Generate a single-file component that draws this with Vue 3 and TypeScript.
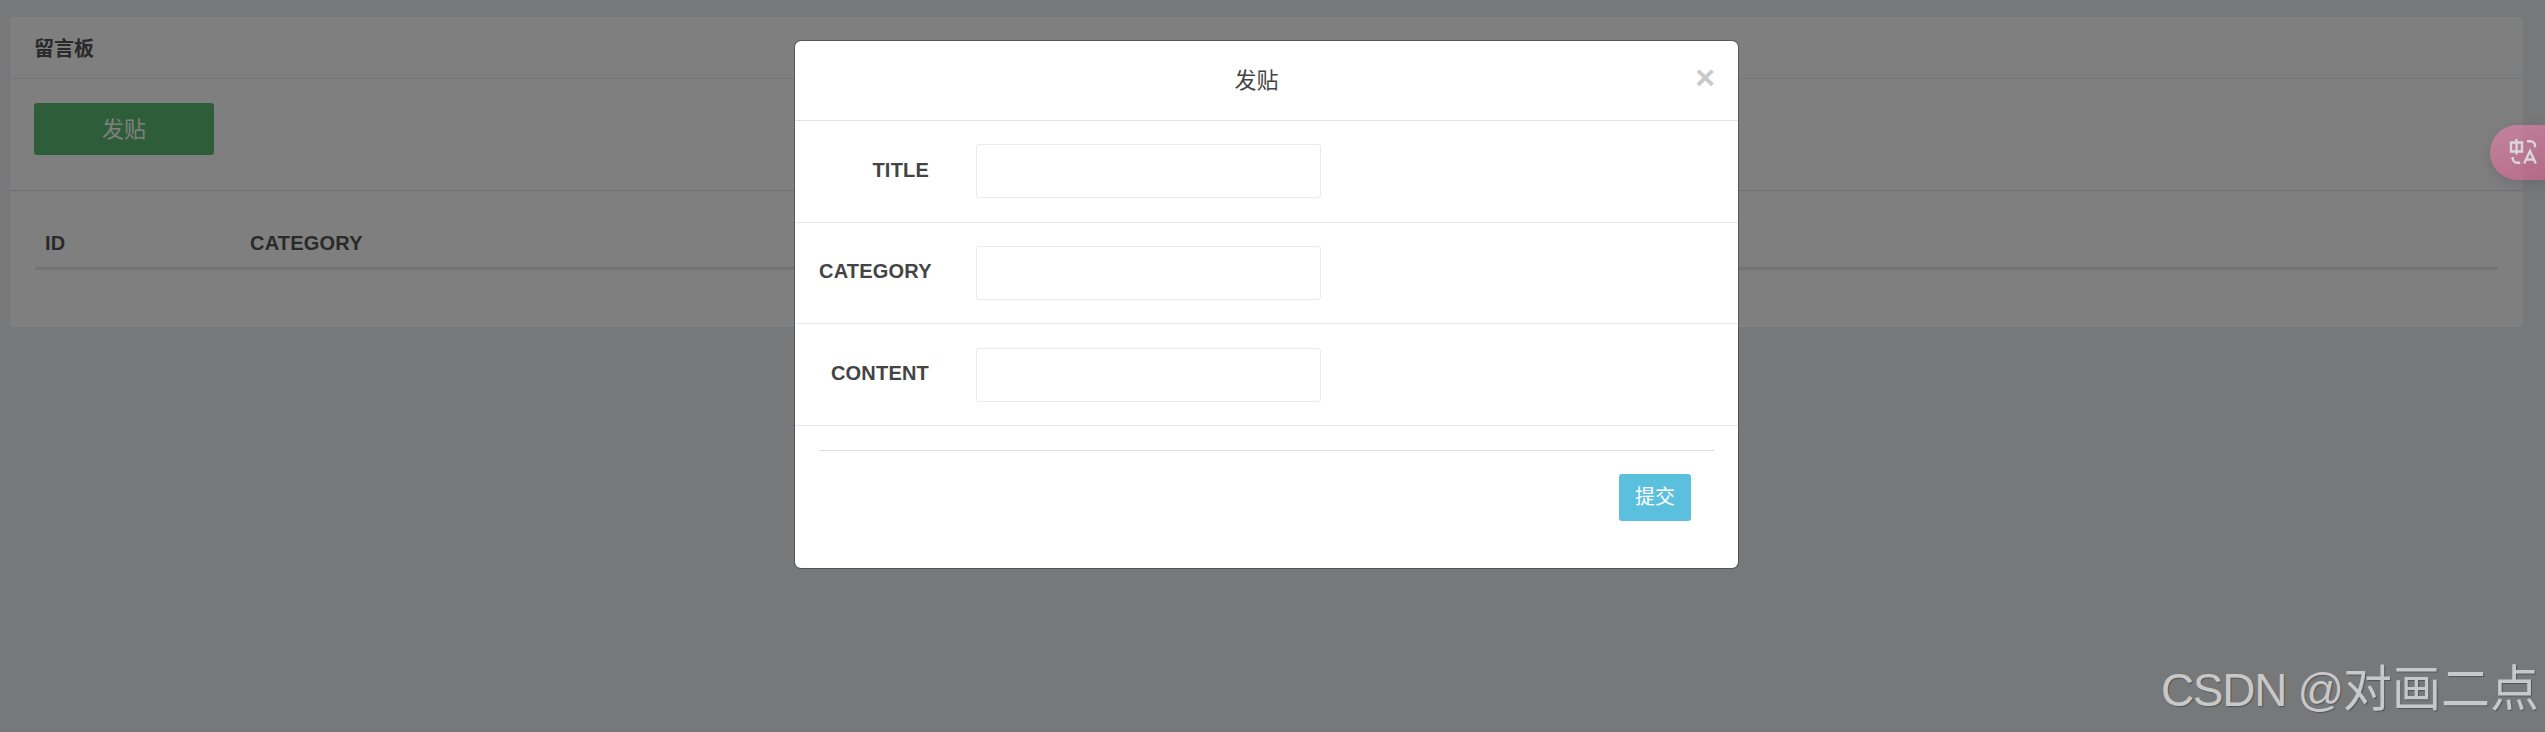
<script setup lang="ts">
const headers: string[] = ['ID', 'CATEGORY']
const fields: string[] = ['TITLE', 'CATEGORY', 'CONTENT']
</script>

<template>
  <div class="page">
    <section class="card">
      <h2 class="card-title">留言板</h2>
      <div class="toolbar"><button class="post">发贴</button></div>
      <div class="table-wrap">
        <div class="thead">
          <div v-for="h in headers" :key="h" class="th">{{ h }}</div>
        </div>
      </div>
    </section>

    <div class="overlay"></div>

    <div class="modal">
      <header class="modal-head">
        <span class="modal-title">发贴</span>
        <span class="close">×</span>
      </header>
      <div v-for="f in fields" :key="f" class="row">
        <label class="label">{{ f }}</label>
        <input class="input" type="text" />
      </div>
      <div class="actions">
        <button class="submit">提交</button>
      </div>
    </div>

    <div class="translate">
      <svg viewBox="0 0 32 32" width="32" height="32" fill="none" stroke="#d8d8d8" stroke-width="2.4">
        <path d="M4 5.5h11v9H4zM9.5 2v15.5" />
        <path d="M20 4.2h3.5a4.5 4.5 0 0 1 4.5 4.5v1.5" />
        <path d="M5.7 20v1.3a4.5 4.5 0 0 0 4.5 4.5h3" />
        <path d="M17.2 26.5l5.8-12.5 5.8 12.5M19.4 22.5h7.2" />
      </svg>
    </div>

    <div class="watermark"><span class="wm-latin">CSDN @</span><span class="wm-cjk">对画二点</span></div>
  </div>
</template>

<style>
html, body { margin: 0; padding: 0; background: #fff; }
</style>

<style scoped>
.page {
  position: relative;
  height: 732px;
  width: 2545px;
  overflow: hidden;
  padding: 17px 22px 0 10px;
  box-sizing: border-box;
  background: #eef0f4;
  font-family: "Liberation Sans", "Noto Sans CJK SC", sans-serif;
  color: #555;
}
.card {
  background: #fff;
  height: 310px;
  border-radius: 4px;
}
.card-title {
  margin: 0;
  height: 62px;
  box-sizing: border-box;
  line-height: 60px;
  padding: 2px 0 0 24px;
  font-size: 20px;
  font-weight: 700;
  color: #555;
  border-bottom: 1px solid #e8ebf0;
}
.toolbar {
  height: 112px;
  padding: 24px 0 0 24px;
  box-sizing: border-box;
  border-bottom: 1px solid #dcdee8;
}
.post {
  display: block;
  width: 180px;
  height: 52px;
  padding: 0 0 4px;
  background: #5cbc72;
  border: 0;
  border-radius: 3px;
  color: #fff;
  font: 22px "Liberation Sans", "Noto Sans CJK SC", sans-serif;
}
.table-wrap { padding: 0 25px; }
.thead {
  display: flex;
  height: 79px;
  align-items: flex-end;
  border-bottom: 3px solid #e6e6e6;
  box-sizing: border-box;
}
.th {
  font-size: 20px;
  font-weight: 700;
  letter-spacing: 0.2px;
  padding: 0 0 12px 10px;
  width: 205px;
  box-sizing: border-box;
  color: #555;
}
.overlay {
  position: absolute;
  inset: 0;
  background: rgba(0, 0, 0, 0.5);
}
.modal {
  position: absolute;
  left: 795px;
  top: 41px;
  width: 943px;
  height: 527px;
  background: #fff;
  border-radius: 6px;
  box-shadow: 0 0 0 1px rgba(0, 0, 0, 0.3);
}
.modal-head {
  position: relative;
  height: 80px;
  box-sizing: border-box;
  display: flex;
  align-items: center;
  justify-content: center;
  padding: 0 20px 5px 0;
  border-bottom: 1px solid #e5e5e5;
}
.modal-title { font-size: 22px; color: #444; }
.close {
  position: absolute;
  right: 23px;
  top: 19px;
  font-size: 34px;
  line-height: 1;
  font-weight: 700;
  color: #c9c9c9;
}
.row {
  height: 101.67px;
  box-sizing: border-box;
  display: flex;
  align-items: center;
  padding-left: 24px;
  border-bottom: 1px solid #e7e7ee;
}
.label {
  width: 110px;
  margin-right: 47px;
  flex: none;
  text-align: right;
  white-space: nowrap;
  font-size: 20px;
  font-weight: 700;
  letter-spacing: 0.2px;
  color: #444;
  padding-bottom: 2px;
}
.input {
  width: 345px;
  height: 54px;
  box-sizing: border-box;
  border: 1px solid #e9e9f0;
  border-radius: 3px;
  background: #fff;
  outline: none;
}
.actions {
  margin: 24px 24px 0;
  padding: 23px 23px 0 0;
  border-top: 1px solid #dedede;
  display: flex;
  justify-content: flex-end;
}
.submit {
  width: 72px;
  height: 47px;
  padding: 0 0 4px;
  background: #5bc0de;
  border: 0;
  border-radius: 3px;
  color: #fff;
  font: 20px "Liberation Sans", "Noto Sans CJK SC", sans-serif;
}
.translate {
  position: absolute;
  left: 2490px;
  top: 125px;
  width: 80px;
  height: 55px;
  border-radius: 28px;
  background: linear-gradient(160deg, rgba(242, 135, 182, 0.58), rgba(228, 90, 140, 0.55));
  box-shadow: 0 4px 14px rgba(0, 0, 0, 0.12);
  display: flex;
  align-items: center;
  padding-left: 17px;
  box-sizing: border-box;
}
.watermark {
  position: absolute;
  right: 6px;
  top: 659px;
  line-height: 60px;
  white-space: nowrap;
  color: #c8c8c8;
  text-shadow: 1px 1px 1px rgba(0, 0, 0, 0.3);
}
.wm-latin { font-size: 46px; letter-spacing: -1.3px; }
.wm-cjk { font-size: 49px; }
</style>
